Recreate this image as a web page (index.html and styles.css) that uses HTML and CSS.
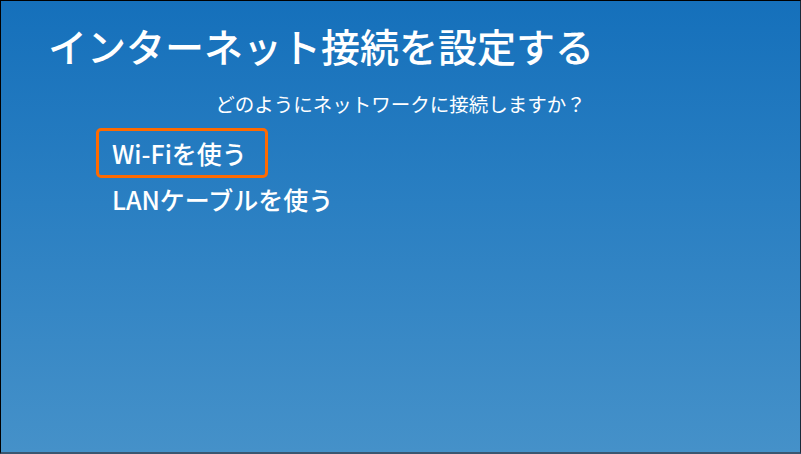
FILE: index.html
```html
<!DOCTYPE html>
<html lang="ja">
<head>
<meta charset="utf-8">
<link rel="stylesheet" href="styles.css">
</head>
<body>
<div class="screen">
  <h1 class="title">インターネット接続を設定する</h1>
  <p class="question">どのようにネットワークに接続しますか？</p>
  <ul class="options">
    <li class="option selected">Wi-Fiを使う</li>
    <li class="option">LANケーブルを使う</li>
  </ul>
</div>
</body>
</html>
```
FILE: styles.css
```css
html, body {
  margin: 0;
  padding: 0;
}
body {
  width: 801px;
  height: 454px;
  overflow: hidden;
  font-family: "Noto Sans CJK JP", "Noto Sans", sans-serif;
  color: #ffffff;
}
.screen {
  box-sizing: border-box;
  width: 801px;
  height: 454px;
  border-top: 1px solid #000;
  border-left: 1px solid #000;
  border-right: 1px solid #1a2a3a;
  border-bottom: 2px solid #3a5670;
  background: linear-gradient(to bottom, #1570bb 0%, #2a7fc2 45%, #4591c9 100%);
  padding: 19px 0 0 0;
  display: flex;
  flex-direction: column;
}
.title {
  margin: 0 0 0 47px;
  font-size: 39px;
  font-weight: 500;
  line-height: 50px;
  letter-spacing: 0;
}
.question {
  margin: 21px 0 0 0;
  text-align: center;
  font-size: 19.5px;
  line-height: 26px;
}
.options {
  list-style: none;
  margin: 11px 0 0 95px;
  padding: 0;
  display: flex;
  flex-direction: column;
  align-items: flex-start;
  gap: 0;
}
.option {
  box-sizing: border-box;
  height: 50px;
  padding: 0 18px 0 13px;
  border: 3px solid transparent;
  border-radius: 5px;
  font-size: 25px;
  font-weight: 500;
  line-height: 44px;
}
.option.selected {
  border-color: #ff6a00;
}
.option + .option {
  margin-top: -4px;
}
```
